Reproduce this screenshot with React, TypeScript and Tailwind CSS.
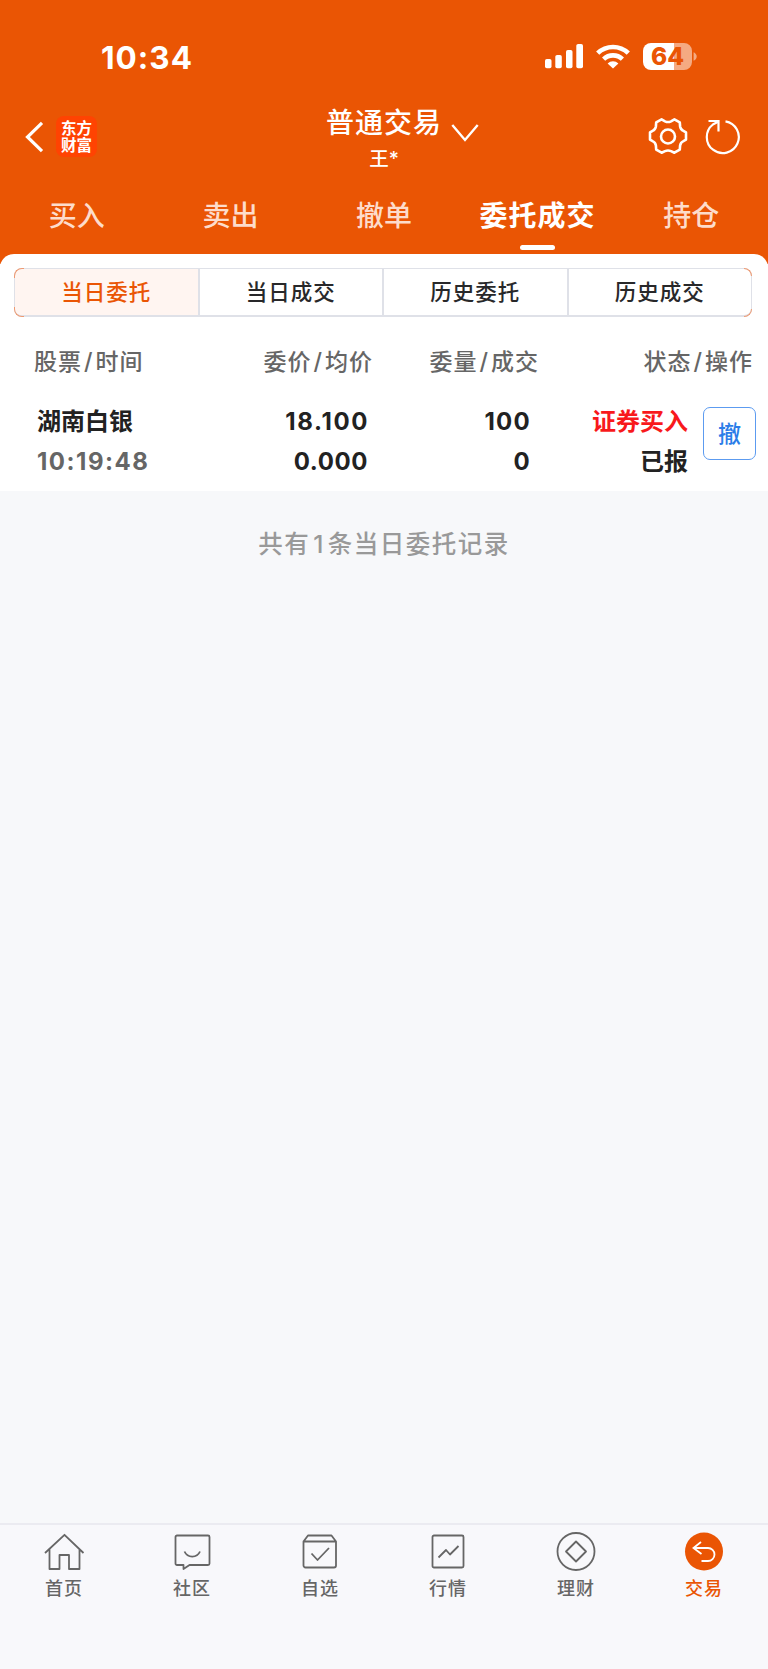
import type { ReactNode } from 'react'
import clsx from 'clsx'

const tabs = ['买入', '卖出', '撤单', '委托成交', '持仓']
const segments = ['当日委托', '当日成交', '历史委托', '历史成交']

function StatusBar() {
  return (
    <div className="flex h-[114px] items-start pt-[38px] pl-[101px] text-white">
      <span className="w-[444px] text-[31.5px] leading-[40px] font-bold tracking-[1px]">10:34</span>
      <svg width="160" height="40" viewBox="545 38 160 40" fill="currentColor" className="shrink-0">
        <rect x="545" y="59" width="6.5" height="9.3" rx="1.8" />
        <rect x="555.3" y="55" width="6.5" height="13.3" rx="1.8" />
        <rect x="566" y="50" width="6.5" height="18.3" rx="1.8" />
        <rect x="576.3" y="44" width="6.7" height="24.3" rx="1.8" />
        <g fill="none" stroke="currentColor" strokeWidth="4.6">
          <path d="M597.7 53.2a22 22 0 0 1 30.6 0" />
          <path d="M603.6 59.1a13.6 13.6 0 0 1 18.8 0" />
        </g>
        <path d="M607.6 63.4a7.8 7.8 0 0 1 10.8 0L613 68.4z" />
        <path d="M651 43h23v27h-23a8 8 0 0 1-8-8V51a8 8 0 0 1 8-8z" />
        <path d="M674 43h10a8 8 0 0 1 8 8v11a8 8 0 0 1-8 8h-10zM693.6 52.2c4.2 2 4.2 6.6 0 8.6z" opacity=".5" />
        <text x="667.5" y="65" textAnchor="middle" fontSize="24.5" fontWeight="800" fill="#ea5504">64</text>
      </svg>
    </div>
  )
}

function TitleBar() {
  return (
    <div className="flex h-[68px] text-white">
      <div className="flex w-[326px] items-start pl-[24px]">
        <svg width="20" height="32" viewBox="0 0 20 32" fill="none" stroke="currentColor" strokeWidth="3.2" className="mt-[7px]">
          <path d="M18 1.8 3.5 16 18 30.2" />
        </svg>
        <div className="mt-[2px] ml-[12px] flex h-[41px] w-[41px] flex-col items-center justify-center rounded-[8px] bg-[#ff4302] text-[15.5px] leading-[17px] font-bold">
          <span>东方</span>
          <span>财富</span>
        </div>
      </div>
      <div className="w-[116px] text-center">
        <div className="-mt-[11px] text-[28px] leading-[40px] font-medium tracking-[1px] whitespace-nowrap">普通交易</div>
        <div className="mt-[2px] text-[19.5px] leading-[28px] font-medium">王*</div>
      </div>
      <svg width="30" height="20" viewBox="0 0 30 20" fill="none" stroke="currentColor" strokeWidth="2.4" className="mt-[9px] ml-[8px]">
        <path d="M2.3 2 15 17 27.7 2" />
      </svg>
      <svg width="40" height="40" viewBox="0 0 40 40" fill="none" stroke="currentColor" strokeWidth="2.6" strokeLinejoin="round" className="mt-[3px] ml-[168px]">
        <path d="M13.6 2.3 17 4.3c2 1 4 1 6 0l3.4-2 5.4 3.1.3 4c.4 2.2 1.500 3.700 3.300 4.500l2.600 1.500v7.200l-2.600 1.500c-1.800.8-2.900 2.300-3.300 4.500l-.3 4-5.400 3.100-3.400-1.600c-2-.8-4-.8-6 0l-3.400 1.600L8.200 32.600l-.3-4c-.4-2.200-1.500-3.700-3.300-4.500L2 22.600v-7.200l2.600-1.500c1.800-.8 2.900-2.300 3.300-4.500l.3-4z" />
        <circle cx="20" cy="19.5" r="7" />
      </svg>
      <svg width="38" height="40" viewBox="0 0 38 40" fill="none" stroke="currentColor" strokeWidth="2.2" className="mt-[3px] ml-[15px]">
        <path d="M22.5 4.3a16 16 0 1 1-12.6 3.2L15.5 4.5" />
        <path d="M5.5 4h10v10.5" />
      </svg>
    </div>
  )
}

function Tabs() {
  return (
    <div className="grid h-[72px] grid-cols-5 text-[28px]">
      {tabs.map((tab, i) => (
        <div key={tab} className="flex flex-col items-center pt-[14px]">
          <span
            className={clsx(
              'leading-[40px] whitespace-nowrap',
              i === 3 ? 'font-bold tracking-[1px] text-white' : 'font-medium text-[#fddccb]',
            )}
          >
            {tab}
          </span>
          {i === 3 && <span className="mt-[9px] h-[5px] w-[35px] rounded-full bg-white" />}
        </div>
      ))}
    </div>
  )
}

function Segments() {
  return (
    <div className="relative mr-[16px] ml-[14px] h-[49px]">
      <div className="flex h-full overflow-hidden rounded-[8px] border border-b-2 border-[#dfe1e8] text-[21.5px] tracking-[1px]">
        {segments.map((name, i) => (
          <div
            key={name}
            className={clsx(
              'flex flex-1 items-center justify-center pt-px font-medium',
              i === 0 ? 'bg-[#fff5f1] text-[#ea5504]' : 'border-l-2 border-[#dfe1e8] text-[#28282a]',
            )}
          >
            {name}
          </div>
        ))}
      </div>
      <span className="absolute top-0 left-0 h-[10px] w-[10px] rounded-tl-[8px] border-t border-l border-[#ee9a72]" />
      <span className="absolute bottom-0 left-0 h-[10px] w-[10px] rounded-bl-[8px] border-b border-l border-[#ee9a72]" />
      <span className="absolute top-0 right-0 h-[8px] w-[8px] rounded-tr-[8px] border-t border-r border-[#ee9a72]" />
      <span className="absolute right-0 bottom-0 h-[8px] w-[8px] rounded-br-[8px] border-r border-b border-[#ee9a72]" />
    </div>
  )
}

function Orders() {
  return (
    <>
      <div className="flex h-[80px] items-start pt-[25px] text-[23px] leading-[40px] font-medium tracking-[1px] text-[#666]">
        <span className="w-[144px] pl-[34px]">股票<Slash />时间</span>
        <span className="w-[229px] text-right">委价<Slash />均价</span>
        <span className="w-[166px] text-right">委量<Slash />成交</span>
        <span className="w-[214px] text-right">状态<Slash />操作</span>
      </div>
      <div className="flex h-[93px] items-start pt-[5px] text-[24px] leading-[40px] font-bold text-[#222]">
        <div className="w-[180px] pl-[37px]">
          <div>湖南白银</div>
          <div className="tracking-[1.5px] text-[#666]">10:19:48</div>
        </div>
        <div className="w-[189px] text-right">
          <div className="tracking-[1.6px]">18.100</div>
          <div className="pr-px tracking-[.6px]">0.000</div>
        </div>
        <div className="w-[162px] text-right tracking-[1.3px]">
          <div>100</div>
          <div>0</div>
        </div>
        <div className="w-[157px] text-right">
          <div className="text-[#f8191c]">证券买入</div>
          <div>已报</div>
        </div>
        <button type="button" className="mt-[5px] ml-[15px] h-[53px] w-[53px] rounded-[7px] border-[1.5px] border-[#5c9bf0] text-[23px] font-medium text-[#2b7de8]">
          撤
        </button>
      </div>
    </>
  )
}

function Slash() {
  return <span className="mx-[2px]">/</span>
}

function NavItem({ label, active, children }: { label: string; active?: boolean; children: ReactNode }) {
  return (
    <div className={clsx('flex flex-col items-center pt-[6px]', active ? 'text-[#ea5504]' : 'text-[#666]')}>
      <svg width="42" height="42" viewBox="0 0 42 42" fill="none" stroke="currentColor" strokeWidth="1.8" strokeLinejoin="round">
        {children}
      </svg>
      <span className="mt-[3px] text-[18px] leading-[26px] font-medium tracking-[1px]">{label}</span>
    </div>
  )
}

function BottomNav() {
  return (
    <nav className="grid h-[146px] grid-cols-6 border-t-2 border-[#ebebf1] bg-[#f8f8fb]">
      <NavItem label="首页">
        <path d="M2 22 21.500 3.800 40.500 22M6.500 18.300V38h10V24h9.500v14h10.500V18.300" />
      </NavItem>
      <NavItem label="社区">
        <path d="M6 4.500h31A1.500 1.500 0 0 1 38.500 6v26.500A1.500 1.500 0 0 1 37 34H18.500l-6 4V34H6a1.500 1.500 0 0 1-1.500-1.500V6A1.500 1.500 0 0 1 6 4.500z" />
        <path d="M13.500 20.500c3 6.700 12.500 6.700 15.500 0" />
      </NavItem>
      <NavItem label="自选">
        <path d="M4.500 10.500h32.500V34.500a2 2 0 0 1-2 2H6.500a2 2 0 0 1-2-2zM4.500 10.500l4.500-6h23.500l4.500 6" />
        <path d="m12.500 22.500 6 6.500L30 17" />
      </NavItem>
      <NavItem label="行情">
        <rect x="5.500" y="4.500" width="31" height="32" rx="1.500" />
        <path d="m11.500 26.500 7.500-7.500 4 4.500 8.500-8.500" />
      </NavItem>
      <NavItem label="理财">
        <circle cx="21" cy="20.500" r="18.500" />
        <path d="m21 10.500 10 10-10 10-10-10z" />
      </NavItem>
      <NavItem label="交易" active>
        <circle cx="21" cy="20.500" r="19" fill="currentColor" stroke="none" />
        <path d="M18 11 10.500 17l8 6M10.500 17h14.500a6.500 6.500 0 0 1 0 13H18.500" stroke="#fff" strokeLinejoin="miter" />
      </NavItem>
    </nav>
  )
}

export default function App() {
  return (
    <div className="flex h-[1669px] w-[768px] flex-col bg-[#f7f8fa] font-[Inter,'Noto_Sans_CJK_SC',sans-serif]">
      <div className="h-[264px] bg-[#ea5504]">
        <StatusBar />
        <TitleBar />
        <Tabs />
      </div>
      <main className="-mt-[10px] flex-1">
        <section className="h-[237px] rounded-t-[14px] bg-white pt-[14px]">
          <Segments />
          <Orders />
        </section>
        <p className="pt-[33px] text-center text-[24.5px] leading-[40px] font-medium tracking-[1.5px] text-[#999]">
          共有<span className="mx-[3px]">1</span>条当日委托记录
        </p>
      </main>
      <BottomNav />
    </div>
  )
}
